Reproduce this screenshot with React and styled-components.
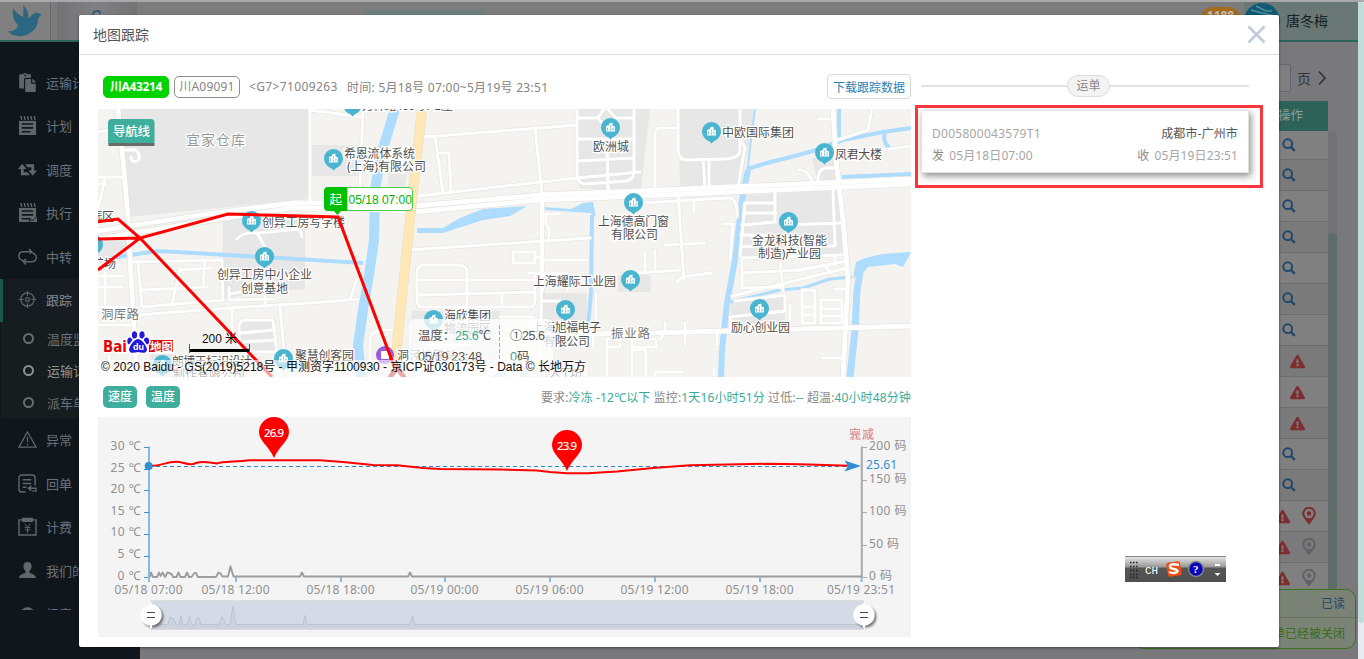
import React from 'react';
import styled, { createGlobalStyle } from 'styled-components';
import { FaPaste, FaExclamationTriangle } from 'react-icons/fa';

const GlobalStyle = createGlobalStyle`
  *, *::before, *::after { box-sizing: border-box; }
  body { margin: 0; background: #79797b; overflow: hidden; font-family: "Noto Sans", "Noto Sans CJK SC", sans-serif; font-size: 12px; }
`;
const SANS = '"Noto Sans", "Noto Sans CJK SC", sans-serif';
const ARIAL = '"Liberation Sans", "Noto Sans CJK SC", sans-serif';

/* ---------- page behind the dialog ---------- */
const Page = styled.div`position: relative; width: 1364px; height: 659px; overflow: hidden; display: flex; border-top: 2px solid #a9a9a9; background: #79797b;`;
const Shell = styled.div`width: 1358px; display: flex; flex-direction: column;`;
const Header = styled.header`height: 40px; flex: none; display: flex; border-bottom: 2px solid #2c6459; background: #7c7c7d;`;
const LogoCell = styled.div`width: 51px; padding: 3px 0 0 7px; background: #808081; border-right: 1px solid #686869;`;
const TopTab = styled.div`width: 80px; margin-left: 6px; display: flex; justify-content: center; padding-top: 7px; background: linear-gradient(90deg, #737375, #808082 50%, #737375);`;
const TopStrip = styled.div`width: 118px; height: 6px; margin: 8px 0 0 229px; background: #6a7f7b;`;
const Alerts = styled.div`width: 39px; height: 24px; margin: 5px 0 0 717px; border-radius: 12px; background: #a66a1c; color: #bdbdbd; text-align: center; font: bold 12px/18px "Noto Sans", sans-serif;`;
const UserCell = styled.div`flex: 1; margin-left: 4px; display: flex; gap: 6px; background: #697874; color: #18211f; font-size: 14px; line-height: 37px;`;
const Body = styled.div`flex: 1; min-height: 0; display: flex;`;
const Sidebar = styled.nav`width: 140px; padding-top: 19px; background: #10171c;`;
const MenuClip = styled.div`width: 79px; height: 549px; overflow: hidden;`;
const MenuItem = styled.div`
  height: 43.5px; width: 140px; display: flex; align-items: center; gap: 9px; padding-left: ${p => p.$active ? 15 : 18}px; padding-bottom: 1px;
  border-left: ${p => p.$active ? '3px solid #1e584d' : '0'};
  background: ${p => p.$active ? '#171c23' : 'transparent'}; color: ${p => p.$active ? '#858a90' : '#69717b'};
  font-size: 13px; white-space: nowrap;
  svg { width: 19px; height: 19px; color: #60676a; flex: none; }
`;
const SubMenu = styled.div`width: 139px; margin-left: 1px; height: 96.5px; background: #151d1f;`;
const SubItem = styled.div`
  height: 32px; display: flex; align-items: center; gap: 13px; padding-left: 22px; font-size: 13px; white-space: nowrap;
  color: ${p => p.$active ? '#92938f' : '#66727a'};
  &::before { content: ''; width: 11px; height: 11px; border-radius: 50%; border: 2px solid ${p => p.$active ? '#8a8f8f' : '#666e71'}; }
`;
const Main = styled.main`flex: 1; display: flex; flex-direction: column; align-items: flex-end; padding: 22px 21px 0 0;`;
const Pager = styled.div`height: 28px; display: flex; align-items: center; padding-right: 10px; font-size: 14px; color: #303337;`;
const PageInput = styled.div`width: 40px; height: 28px; margin-right: 6px; border: 1px solid #606874; border-radius: 2px; background: #7f7f80;`;
const NextPage = styled.svg`width: 10px; height: 16px; margin-left: 6px;`;
const TableArea = styled.div`display: flex; margin-top: 9px;`;
const Table = styled.div`width: 120px;`;
const TableHead = styled.div`height: 30px; padding-left: 70px; background: #2c6258; color: #8a9d99; font-size: 12.5px; line-height: 30px;`;
const Row = styled.div`
  height: 31px; display: flex; align-items: center; justify-content: flex-end; gap: 12px;
  padding-right: ${p => p.$kind === 'one' ? 32 : p.$kind === 'two' ? 23 : 12}px;
  border-bottom: 1px solid #6d6d6f; background: ${p => p.$alt ? '#7a7a7a' : '#808080'};
  &:nth-child(2) { height: 29px; padding-bottom: 1px; }
  svg { flex: none; }
`;
const TableScroll = styled.div`width: 9px; margin-top: 30px; height: 459px; background: #737375; border-radius: 4px 4px 0 0; padding-top: 102px;`;
const TableThumb = styled.div`height: 357px; background: #5c6d69; border-radius: 4px 4px 0 0;`;
const PageScroll = styled.div`width: 6px; background: #e9e9f2;`;
const PageThumb = styled.div`height: 621px; background: #c2ddd9; border-radius: 3px;`;
const Toast = styled.aside`position: absolute; left: 1134px; top: 587px; width: 222px; height: 60px; border: 1px solid #3c721d; border-radius: 10px; background: #7b8276; text-align: right; line-height: 28px;`;
const ToastTop = styled.div`height: 28px; padding-right: 10px; border-bottom: 1px solid #667360; color: #1f4967;`;
const ToastText = styled.div`padding-right: 10px; line-height: 31px; color: #376d1b;`;

/* ---------- dialog ---------- */
const Dialog = styled.section`position: absolute; left: 79px; top: 13px; width: 1200px; height: 632px; background: #fff; border-radius: 2px; box-shadow: 0 1px 3px rgba(0,0,0,.45); display: flex; flex-direction: column;`;
const DialogHead = styled.div`height: 40px; flex: none; display: flex; align-items: center; justify-content: space-between; padding: 0 13px 0 14px; border-bottom: 1px solid #dcdcdc; font-size: 14px; color: #555;`;
const DialogTitle = styled.span`padding-bottom: 2px;`;
const DialogBody = styled.div`flex: 1; display: flex; padding: 0 16px 10px 19px;`;
const Left = styled.div`width: 813px; flex: none;`;
const InfoBar = styled.div`height: 54px; display: flex; align-items: center; padding: 9px 0 0 5px; color: #858585; white-space: nowrap;`;
const Plate = styled.span`
  height: 22px; width: 66px; margin-right: 5px; border-radius: 5px; text-align: center; line-height: 20px;
  border: 1px solid ${p => p.$current ? '#00d200' : '#8d8d8d'}; background: ${p => p.$current ? '#00d200' : '#fff'};
  color: ${p => p.$current ? '#fff' : '#858585'}; font-weight: ${p => p.$current ? 700 : 400}; letter-spacing: ${p => p.$current ? -0.35 : 0.2}px;
`;
const Device = styled.span`margin-left: 4px; width: 98px; letter-spacing: .37px;`;
const Period = styled.span`letter-spacing: .27px;`;
const Download = styled.button`margin-left: auto; height: 25px; width: 84px; padding: 0; border: 1px solid #d8d8d8; border-radius: 4px; background: #fff; color: #2f7fb5; font: 12px ${SANS};`;
const MapSvg = styled.svg`display: block; width: 813px; height: 268px; background: #f4f3ef;`;
const StatsBar = styled.div`height: 40px; display: flex; align-items: center; gap: 9px; padding-left: 5px; white-space: nowrap;`;
const Toggle = styled.span`width: 34px; height: 22px; border-radius: 5px; background: #3fae9d; color: #fff; text-align: center; line-height: 21px; font-weight: 500;`;
const Stats = styled.div`margin-left: auto; color: #888; letter-spacing: .13px;`;
const Teal = styled.b`font-weight: 400; color: #38ab96;`;
const ChartSvg = styled.svg`display: block; width: 813px; height: 220px; background: #f4f4f4;`;
const Right = styled.div`width: 348px; margin-left: 4px;`;
const Divider = styled.div`height: 51px; padding: 11px 14px 0 6px; display: flex; align-items: center; color: #888;
  &::before, &::after { content: ''; height: 2px; background: #e2e2e2; }
  &::before { width: 146px; }
  &::after { flex: 1; }
`;
const Pill = styled.span`width: 43px; height: 22px; border: 1px solid #ddd; border-radius: 11px; background: #f3f3f3; text-align: center; line-height: 20px;`;
const Highlight = styled.div`height: 83px; border: 3px solid #fb363c; padding: 2px 11px 0 3px; margin-top: -1px;`;
const Card = styled.div`height: 63px; border: 1px solid #e2e2e2; box-shadow: 2px 3px 7px rgba(0,0,0,.45); padding: 12px 10px 0; background: #fff;`;
const CardLine = styled.div`height: 22px; display: flex; justify-content: space-between; line-height: 22px; color: #a6a6a6; letter-spacing: .13px;
  b { font-weight: 400; color: #555; }
  i { font-style: normal; color: #888; margin-right: 5px; }
`;
const OrderNo = styled.span`letter-spacing: .28px;`;
const ImeBar = styled.div`position: absolute; left: 1125px; top: 554px; width: 101px; height: 26px; display: flex; align-items: center; border-top: 1px solid #888; background: linear-gradient(#e4e4e4 0, #989898 10px, #565656 11px, #4f4f4f);`;

/* ---------- icons ---------- */
const Bird = () => (
  <svg width="36" height="33" viewBox="0 0 36 33"><path fill="#2c6782" d="M6 3C5 11 7 16 11 20C10 24 6 27 1 26C5 32 16 33 23 28C29 24 31 20 31 15C31 12 33 10 35 10C31 7 27 7 24 11C23 12 22 13 21 13C22 8 20 4 16 0C17 5 16 9 16 12C12 10 8 7 6 3Z" /></svg>
);
const Pad = ({ check }) => (
  <svg viewBox="0 0 20 20" fill="currentColor"><path d="M1 5h18v15H1z" /><path d="M3 1v4M6.500 1v4M10 1v4M13.500 1v4M17 1v4" stroke="#10171c" strokeWidth="3" /><path d="M3 0l1 4M6.500 0l1 4M10 0l1 4M13.500 0l1 4M17 0l1 4" stroke="currentColor" strokeWidth="1.500" /><path d="M4 8.500h12M4 12.500h12M4 16.500h9" stroke="#10171c" strokeWidth="1.600" />{check && <path d="M12 16l3 3 6-6v8h-9z" fill="#60676a" stroke="#10171c" />}</svg>
);
const Exchange = () => <svg viewBox="0 0 20 20"><path d="M0 9.500L4.500 4L9 9.500H6V13H10L12.500 16H3V9.500ZM20 11L15.500 16.500L11 11H14V7.500H10L7.500 4.500H17V11Z" fill="currentColor" /></svg>;
const Loop = () => <svg viewBox="0 0 20 20" fill="none" stroke="currentColor" strokeWidth="1.500"><path d="M14 5H5.500a4.500 4.500 0 0 0-3 8Q4 14.500 6 14.500M11.500 2l3 3-2 2M6 15.500h8.500a4.500 4.500 0 0 0 3-8Q16.500 6.500 15 6M8.500 12.500l-3 3 3 3" /></svg>;
const Target = () => <svg viewBox="0 0 20 20" fill="none" stroke="currentColor" strokeWidth="1.300"><circle cx="10" cy="10" r="7" /><circle cx="10" cy="10" r="2" /><path d="M10 1v5M10 14v5M1 10h5M14 10h5" /></svg>;
const WarnLine = () => <svg viewBox="0 0 20 20" fill="none" stroke="currentColor" strokeWidth="1.300"><path d="M10 2L1 18h18zM10 7v6M10 14.500v1.500" /></svg>;
const Receipt = () => <svg viewBox="0 0 20 20" fill="none" stroke="currentColor" strokeWidth="1.500"><path d="M18 12V4a3 3 0 0 0-3-3H4a3 3 0 0 0-3 3v12a3 3 0 0 0 3 3h4M5 6h9M5 10h9M5 14h4M12 15h7v3h-4M14 12.500l-3 2.500 3 2.500" /></svg>;
const Fee = () => <svg viewBox="0 0 20 20" fill="none" stroke="currentColor" strokeWidth="1.500"><path d="M1 3h18v16H1z" /><path d="M5 1.500h10v3H5z" fill="currentColor" /><path d="M7 7l3 4 3-4M7 11h6M7 13.500h6M10 11v6" strokeWidth="1" /></svg>;
const Person = () => <svg viewBox="0 0 20 20" fill="currentColor"><path d="M10 1c3 0 4.500 2 4.300 5-.2 2-1 3.500-2.300 4.700v1.300c1 1.500 7 1.500 7 6H1c0-4.500 6-4.500 7-6v-1.300C6.700 9.500 5.900 8 5.700 6 5.500 3 7 1 10 1z" /></svg>;
const Dome = () => <svg viewBox="0 0 20 20"><circle cx="10" cy="11.500" r="8" fill="currentColor" /></svg>;
const Search = () => <svg width="14" height="14" viewBox="0 0 14 14" fill="none" stroke="#20486a" strokeWidth="2"><circle cx="5.700" cy="5.700" r="4.400" /><path d="M8.800 8.800l4 4" strokeWidth="2.400" /></svg>;
const Marker = ({ color }) => <svg width="14" height="18" viewBox="0 0 14 18" fill="none" stroke={color} strokeWidth="2"><path d="M7 16C3 11 1.200 9 1.200 6.500a5.800 5.800 0 0 1 11.600 0C12.800 9 11 11 7 16z" /><path d="M4 11l3 6 3-6z" fill={color} stroke="none" /><circle cx="7" cy="6.500" r="1.200" /></svg>;

const menuTop = [[<FaPaste />, '运输计划'], [<Pad />, '计划'], [<Exchange />, '调度'], [<Pad check />, '执行'], [<Loop />, '中转'], [<Target />, '跟踪', true]];
const menuBottom = [[<WarnLine />, '异常'], [<Receipt />, '回单'], [<Fee />, '计费'], [<Person />, '我们的'], [<Dome />, '报表']];
const rows = [...Array(7).fill('one'), 'two', 'two', 'two', 'one', 'one', 'red', 'gray', 'gray'];

/* ---------- map ---------- */
const blocks = [
  'M121 109H309V199L128 217Z', 'M312 145H360V176H312Z', 'M388 174H407L404 190H388Z', 'M577 109H650L642 180L640 193L580 188Z',
  'M678 109H755L741 187H680Z', 'M742 195L840 190L843 255L740 258Z', 'M731 300L785 294V328H730Z', 'M618 275H651V292H618Z',
  'M223 217H305V290H265L223 300Z', 'M412 311H500V377H408Z', 'M543 293H587V327H543Z', 'M812 158H838V183H818Z', 'M150 354H197V377H150Z', 'M98 236L127 231V256L98 260Z', 'M238 320H276V350H242Z'
];
const minorRoads = [
  'M310 109V203', 'M310 110L361 117M363 109L360 187', 'M98 132L110 130M98 177H122M98 184H106M105 178L98 210', 'M122 150H135Q140 152 139 160Q132 164 131 157',
  'M132 262L222 260L223 300L142 307L138 262M142 290L208 287M180 268L172 304M180 270L213 268M205 262L203 286', 'M138 315L230 308L323 302L358 299M357 279L351 297', 'M232 308V340M280 307L284 350',
  'M237 239Q242 232 257 233L300 229L302 237M257 233L265 247M265 267V307M229 288V300L273 299M229 294L265 288', 'M239 345V326Q239 320 246 320H273L277 352M240 333L275 330M240 342L276 340M242 352H277',
  'M98 276H124M98 287H122M105 265V307M98 307H125', 'M409 250L590 238M424 137L577 125M535 128L542 193L541 320', 'M435 137L443 193M438 153H449L451 192', 'M418 196L577 178L640 172',
  'M424 265H458Q467 265 467 272V307H423Q417 307 417 300V272Q417 265 424 265M417 280H535M417 295L535 292M467 307H530Q535 307 535 300V276M502 294V307', 'M513 263V252H535V263ZM535 257H542M542 260H587M528 273H567V290',
  'M545 214H560M546 215V224Q551 229 548 241M543 301H560M500 317H533V333M507 323V340', 'M577 109V176Q578 184 586 184L627 181Q634 179 634 172V109M577 118H598M616 118H634M577 139H634M577 161L634 158M604 109L598 118L602 123M608 109L616 118M607 139L608 190',
  'M655 195V134Q655 128 661 128H675M678 109V151Q679 160 687 160L725 159Q740 158 740 150V109M703 160L705 188M709 160V188M740 139L745 147L738 187', 'M837 140L868 130L872 109M870 152L911 146M798 170Q807 168 813 183M818 183Q817 169 826 168H837M818 119H833',
  'M643 203L728 198Q738 197 737 217M694 201V213M678 193L684 280M665 245L705 243M623 274L680 270M677 282L682 277L712 273M645 253V272M655 250V270',
  'M745 203H775M746 213H776M745 203L740 256M742 225L774 222M741 235H774M741 247L772 245M775 190V222M742 258L843 255M724 224H733L730 260', 'M833 190L835 246H820M785 225L840 223M835 256V265M742 260V288L783 287M743 273L797 270L825 265L831 273M780 258L783 291M732 296L847 268M797 271L847 261',
  'M730 317L785 311V295L735 301M730 334L731 317M790 305V325', 'M807 290H815V323H802V290ZM802 307H815M802 315H815M821 300H842V323H821ZM821 309H842M821 316H842M834 289H848', 'M630 339H656V347H632M632 339V377M632 350H646V377M655 377V372H683M665 322V332L660 340M685 322V345M717 332V345M822 358H842M714 375V368',
  'M109 355V377M98 325H130M377 330H398M370 377V340Q371 331 380 331M596 293V333M593 333V345', 'M607 377V339H620V347H607', 'M503 373H540V347M430 361V345H470'
];
const mainRoads = ['M98 239L207 221L293 208L370 209L415 212L540 200L640 196L911 184', 'M98 231L207 214L293 203L370 203', 'M415 206L540 195L640 191L911 179', 'M118 109L123 160L128 217L131 277L137 377', 'M833 109L836 160L843 220L848 277L843 377', 'M577 332L593 334L653 333L911 326', 'M542 195V290'];
const pins = [[352, 104], [333, 158], [610, 127], [711, 131], [824, 152], [633, 202], [788, 221], [759, 308], [630, 279], [565, 309], [433, 319], [251, 220], [264, 256], [283, 358], [162, 364], [500, 381], [93, 244]];
// label, left edge, vertical centre, width
const labels = [
  ['万祥路400号7-2座', 362, 105, 91], ['希恩流体系统', 344, 153, 71], ['(上海)有限公司', 347, 166, 79], ['欧洲城', 593, 146, 36], ['中欧国际集团', 722, 132, 72], ['凤君大楼', 835, 154, 47],
  ['上海德高门窗', 598, 221, 71], ['有限公司', 611, 234, 47], ['金龙科技(智能', 752, 240, 75], ['制造)产业园', 758, 253, 63], ['励心创业园', 731, 327, 59], ['上海耀际工业园', 533, 281, 83],
  ['上海旭福电子', 532, 327, 69], ['有限公司', 543, 341, 47], ['海欣集团', 444, 315, 47], ['物流园区', 444, 328, 47], ['创异工房写字楼', 262, 222, 83], ['创异工房中小企业', 217, 274, 95], ['创意基地', 241, 288, 47],
  ['聚慧创客园', 295, 355, 59], ['朗博王标识设计', 172, 361, 80], ['制作有限公司', 173, 374, 72], ['洞泾地铁站', 397, 355, 60], ['园区', 92, 216, 22], ['广场', 94, 263, 22], ['上海传媒人工坊', 508, 373, 74]
];

const TrackMap = () => (
  <MapSvg viewBox="98 109 813 268">
    {blocks.map(d => <path key={d} d={d} fill="#e7e7e7" />)}
    <g fill="none" stroke="#addcfe" strokeLinejoin="round">
      <path d="M395 109L381 155L375 190L374 240L369 275L363 310L358 345L361 377" strokeWidth="10" />
      <path d="M98 260L157 251L177 252L363 263" strokeWidth="4" /><path d="M592 215L591 293L588 327" strokeWidth="4" />
      <path d="M755 109L750 147L748 168" strokeWidth="2" /><path d="M748 170L742 200L735 260L727 303L722 350L721 377" strokeWidth="6" />
      <path d="M747 169Q758 165 787 158L813 151L843 140L883 132L911 128M839 109V138M885 133Q882 142 890 148" strokeWidth="4" /><path d="M842 177L911 174" strokeWidth="4" />
      <path d="M730 302L780 290L803 288L830 279L852 277" strokeWidth="3" /><path d="M861 266L857 290L855 330L850 377" strokeWidth="7" />
    </g>
    <g fill="#addcfe"><path d="M417 228H443L460 218L483 209L527 206L510 216L483 220L443 233H417Z" /><path d="M543 207L571 209L583 203L593 202L596 217L590 213L545 210Z" /><path d="M853 278L856 262L865 258L883 254L911 252L908 258L903 267L895 264L868 267L863 273Z" /></g>
    <g fill="none" strokeLinejoin="round" strokeLinecap="round">
      {minorRoads.map(d => <path key={d} d={d} stroke="#e3e3e1" strokeWidth="4.200" />)}
      {mainRoads.map(d => <path key={d} d={d} stroke="#e0e0de" strokeWidth="6" />)}
      {minorRoads.map(d => <path key={d} d={d} stroke="#fff" strokeWidth="3" />)}
      {mainRoads.map(d => <path key={d} d={d} stroke="#fff" strokeWidth="4.800" />)}
      <path d="M422 109L411 210L397 345L395 377" stroke="#e9ddc0" strokeWidth="10" /><path d="M422 109L411 210L397 345L395 377" stroke="#ffe8b6" strokeWidth="8.800" />
    </g>
    {pins.map(([x, y]) => (
      <g key={`${x}-${y}`} transform={`translate(${x + 0.5} ${y + 0.5})`}><path d="M-9.500 0a9.500 9.500 0 1 1 19 0C9.500 5 5 9 2.500 9.500L0 12L-2.500 9.500C-5 9-9.500 5-9.500 0Z" fill="#49b5d1" /><path d="M-4.500 4V-1.500L-1.500 -2.500V-4L2 -5V-2L4.500 -1V4Z" fill="#fff" /><path d="M0 -2V0M0 1V3M2.500 0V3M-3 0V3" stroke="#49b5d1" strokeWidth=".8" /></g>
    ))}
    <circle cx="385" cy="355" r="9" fill="#9b5be0" /><path d="M381 351h8v8h-8z" fill="#fff" />
    <g fill="#505050" stroke="#fff" strokeWidth="2.500" paintOrder="stroke" fontSize="12" fontFamily={SANS}>
      {labels.map(([t, x, y, w]) => <text key={t + x} x={x} y={y + 4.5} textLength={w}>{t}</text>)}
      <text x="186" y="144.500" textLength="59" fontSize="14" fill="#999">宜家仓库</text><text x="101" y="319" textLength="38" fill="#777" fontSize="12.500">洞厍路</text><text x="611" y="337.500" textLength="39" fill="#777" fontSize="12.500">振业路</text>
    </g>
    <path d="M98 221.700L118 219L140 238L272 377M98 239L140 238M98 270L140 238L228 214L338 217L394 366" stroke="#f00" strokeWidth="3" fill="none" />
    <path d="M397 363L410 382H384Z" fill="#c62828" /><path d="M397 372l4 5h-8z" fill="#fff" />
    <rect x="409" y="319" width="144" height="58" rx="6" fill="#fff" fillOpacity=".75" />
    <path d="M499.500 325V364" stroke="#aaa" strokeDasharray="4 2" />
    <g fontFamily={ARIAL} fontSize="12.500" fill="#555">
      <text x="418" y="339.500" textLength="73">温度：<tspan fill="#38ab96">25.6</tspan>℃</text><text x="510" y="339.500" textLength="35">①25.6</text>
      <text x="418" y="360.500" textLength="64">05/19 23:48</text><text x="510" y="360.500"><tspan fill="#38ab96">0</tspan>码</text>
    </g>
    <g>
      <path d="M347 187.500H409Q412.500 187.500 412.500 191V207Q412.500 210.500 409 210.500H347Z" fill="#fff" stroke="#4bcf4b" />
      <path d="M328 187H347V211H341L337.500 215L334 211H328Q324 211 324 207V191Q324 187 328 187Z" fill="#00bf00" />
      <text x="329.500" y="203.500" fill="#fff" fontSize="12.500" fontFamily={SANS}>起</text><text x="348.500" y="203.500" fill="#00b400" fontSize="12.500" textLength="63.500" lengthAdjust="spacingAndGlyphs" fontFamily={ARIAL}>05/18 07:00</text>
    </g>
    <rect x="108" y="119" width="46.500" height="27" rx="4" fill="#3fae9d" /><path d="M108.500 143H154.500V146H108.500Z" fill="#6b6b6b" /><text x="113" y="136" fill="#fff" fontSize="12.500" fontWeight="500" textLength="37" fontFamily={SANS}>导航线</text>
    <rect x="98" y="360" width="489" height="17" fill="#fff" fillOpacity=".6" />
    <g fontFamily={ARIAL} fill="#111" fontSize="12">
      <text x="202" y="343" textLength="35">200 米</text><path d="M189.500 344V353M249.500 344V353" stroke="#555" /><path d="M190 350.500H249" stroke="#000" strokeWidth="3" />
      <text x="101" y="371" textLength="485">© 2020 Baidu - GS(2019)5218号 - 甲测资字1100930 - 京ICP证030173号 - Data © 长地万方</text>
    </g>
    <g stroke="#fff" strokeWidth="3" paintOrder="stroke" fontWeight="bold">
      <text x="103" y="352" fontSize="15.500" fill="#e10602" textLength="24" lengthAdjust="spacingAndGlyphs" fontFamily='"DejaVu Sans", sans-serif'>Bai</text>
      <rect x="149" y="340" width="24" height="12" fill="#e10602" />
      <g fill="#2319dc"><ellipse cx="130" cy="341" rx="2.700" ry="3.500" /><ellipse cx="134.500" cy="335" rx="2.600" ry="3.700" /><ellipse cx="142" cy="335" rx="2.600" ry="3.700" /><ellipse cx="146.500" cy="341" rx="2.700" ry="3.500" /><path d="M138 339C143 340 146 346 147 349C147 354 142 353 138 352C134 353 129 354 129 349C130 346 133 340 138 339Z" /></g>
      <text x="133" y="350" fontSize="9" stroke="none" fill="#fff" fontFamily={ARIAL}>du</text><text x="150" y="350.500" fontSize="11.500" stroke="none" fill="#fff" fontFamily={SANS}>地图</text>
    </g>
  </MapSvg>
);

/* ---------- chart ---------- */
const speed = 'M150 577L151 572.500L153 577H157L159 572.500L160.500 576L162.500 572.500L165 577L167.500 572.500L171.500 574L173 577H176.500L178.500 572.500L180.500 577H185L187 572.500L189 577H191.500L194.500 573L196 573L198 577H216L218.500 572.500L220.500 573.500L222.500 576.500H228L230.500 566.500L233.500 576.500H300L302 572.500L304 576.500H408L410 572.500L412 576.500H862';
const xTicks = [[149, '05/18 07:00'], [236, '05/18 12:00'], [341, '05/18 18:00'], [445, '05/19 00:00'], [550, '05/19 06:00'], [655, '05/19 12:00'], [760, '05/19 18:00'], [861.5, '05/19 23:51']];
const Balloon = ({ x, y, value }) => (
  <g transform={`translate(${x} ${y})`}><path d="M-15 0A15 15 0 0 1 15 0C15 9 5 14 0 26C-5 14-15 9-15 0Z" fill="#f00" /><text y="4.500" fill="#fff" fontSize="11.500" fontWeight="500" textAnchor="middle" textLength="20">{value}</text></g>
);
const Handle = ({ x }) => (
  <g><circle cx={x + 2} cy="617" r="10.500" fill="#444" opacity=".7" filter="url(#soft)" /><path d={`M${x} 603V628`} stroke="#fff" strokeWidth="2" /><circle cx={x} cy="615" r="10.700" fill="#fff" /><path d={`M${x - 4} 612.500h8M${x - 4} 617.500h8`} stroke="#444" strokeWidth="1.200" /></g>
);
const Chart = () => (
  <ChartSvg viewBox="98 417 813 220" fontFamily={SANS} fontSize="12">
    <defs><filter id="soft"><feGaussianBlur stdDeviation="1.300" /></filter></defs>
    <path d="M149 446.500V577" stroke="#86bce3" strokeWidth="2" /><path d="M861.800 446.500V577" stroke="#aaa" strokeWidth="2" />
    {[30, 25, 20, 15, 10, 5, 0].map((v, i) => <g key={v}><path d={`M144 ${Math.round(447 + i * 21.7) + 0.5}H149`} stroke="#3c91cf" /><text x="140.500" y={450 + i * 21.6} textAnchor="end" fill="#909090" textLength={v > 9 ? 30 : 23}>{v} ℃</text></g>)}
    {[200, 150, 100, 50, 0].map((v, i) => <g key={v}><path d={`M862 ${Math.round(447 + i * 32.5) + 0.5}H867`} stroke="#aaa" /><text x="869" y={450 + i * 32.5} fill="#909090" textLength={v > 99 ? 37.5 : v > 9 ? 30 : 23}>{v} 码</text></g>)}
    <path d={speed} stroke="#9b9e9a" strokeWidth="1.900" fill="none" strokeLinejoin="round" />
    {xTicks.map(([x, t]) => <g key={t}><path d={`M${x} 577V582`} stroke="#86bce3" strokeWidth="2" /><text x={x - 0.5} y="594" textAnchor="middle" textLength="68" fill="#909090">{t}</text></g>)}
    <path d="M149 466.500H850" stroke="#2e8acb" strokeDasharray="4 3" />
    <path d="M150 466C164 466 165 461.700 176 461.700C183 461.700 186 465 193 464C201 461 205 462 217 463.500C222 461.500 233 462 250 460.300H320L343 462L373 465L397 465.300L423 468L440 469L500 469.500L537 470.500L550 472L567 473.300H588L617 471.600L653 468L690 465.300L767 463.800L800 464.300L850 465.800" stroke="#f00" strokeWidth="2" fill="none" />
    <circle cx="148.700" cy="466" r="4" fill="#2e8fd3" /><path d="M844.500 460.500L861 466L844.500 471.500L848 466Z" fill="#2e8fd3" /><text x="866" y="469.300" fill="#3a8fd0" textLength="31">25.61</text>
    <text x="849" y="438.500" fill="#e86868" opacity=".6" textLength="25">衰减</text><text x="849" y="438.500" fill="#b66" opacity=".5" textLength="25">完成</text>
    <Balloon x={274} y={432} value="26.9" /><Balloon x={567} y={445} value="23.9" />
    <rect x="151" y="600" width="713" height="29.500" fill="#d5dbe6" /><rect x="151" y="624" width="713" height="5.500" fill="#cbd1df" />
    <path d="M151 600.500H864" stroke="#dedede" /><path d="M151 624.500H168L170 617L174 619L176 624.500H179L181 616L183 624.500H187L189.500 616L191.500 624.500H195L197 618H199L201 624.500H219L221.500 616.500L223.500 618L225.500 624.500H230L233 606L236 624.500H303L305 615.500L307 624.500H410L412.500 615.500L415 624.500H864" stroke="#bdc4d2" fill="#cbd1df" /><path d="M151 629.300H864" stroke="#dadada" />
    <Handle x={151} /><Handle x={864} />
  </ChartSvg>
);

export default function App() {
  return (
    <Page>
      <GlobalStyle />
      <Shell>
        <Header>
          <LogoCell><Bird /></LogoCell>
          <TopTab><svg width="12" height="12" viewBox="0 0 12 12"><path d="M2 8Q1 2 6 2Q10 2 9 5" fill="none" stroke="#315a72" strokeWidth="1.800" /></svg></TopTab>
          <TopStrip />
          <Alerts>1188</Alerts>
          <UserCell><svg width="36" height="38" viewBox="0 0 36 38"><circle cx="18" cy="19" r="18" fill="#125a72" /><path d="M7 8L18 11L31 14M12 4L22 9L28 9" stroke="#4d8d9d" strokeWidth="1.500" fill="none" /></svg>唐冬梅</UserCell>
        </Header>
        <Body>
          <Sidebar><MenuClip>
            {menuTop.map(([icon, label, active]) => <MenuItem key={label} $active={active}>{icon}{label}</MenuItem>)}
            <SubMenu><SubItem>温度监控</SubItem><SubItem $active>运输订单</SubItem><SubItem>派车单</SubItem></SubMenu>
            {menuBottom.map(([icon, label]) => <MenuItem key={label}>{icon}{label}</MenuItem>)}
          </MenuClip></Sidebar>
          <Main>
            <Pager><PageInput />页<NextPage viewBox="0 0 10 16"><path d="M2 1.500L8 8L2 14.500" fill="none" stroke="#333639" strokeWidth="1.800" /></NextPage></Pager>
            <TableArea>
              <Table>
                <TableHead>操作</TableHead>
                {rows.map((kind, i) => (
                  <Row key={i} $kind={kind} $alt={i % 2 === 1}>
                    {(kind === 'one' || kind === 'two') && <Search />}
                    {kind !== 'one' && <FaExclamationTriangle size={15} color="#7e2c2e" />}
                    {kind === 'red' && <Marker color="#7e2c2e" />}{kind === 'gray' && <Marker color="#626264" />}
                  </Row>
                ))}
              </Table>
              <TableScroll><TableThumb /></TableScroll>
            </TableArea>
          </Main>
        </Body>
      </Shell>
      <PageScroll><PageThumb /></PageScroll>
      <Toast><ToastTop>已读</ToastTop><ToastText>运单已经被关闭</ToastText></Toast>

      <Dialog>
        <DialogHead><DialogTitle>地图跟踪</DialogTitle><svg width="19" height="19" viewBox="0 0 19 19"><path d="M1.500 1.500L17.500 17.500M17.500 1.500L1.500 17.500" stroke="#bfcadb" strokeWidth="2.600" /></svg></DialogHead>
        <DialogBody>
          <Left>
            <InfoBar>
              <Plate $current>川A43214</Plate><Plate>川A09091</Plate><Device>&lt;G7&gt;71009263</Device><Period>时间: 5月18号 07:00~5月19号 23:51</Period>
              <Download>下载跟踪数据</Download>
            </InfoBar>
            <TrackMap />
            <StatsBar>
              <Toggle>速度</Toggle><Toggle>温度</Toggle>
              <Stats>要求:<Teal>冷冻 -12℃以下</Teal> 监控:<Teal>1天16小时51分</Teal> 过低:<Teal>--</Teal> 超温:<Teal>40小时48分钟</Teal></Stats>
            </StatsBar>
            <Chart />
          </Left>
          <Right>
            <Divider><Pill>运单</Pill></Divider>
            <Highlight><Card>
              <CardLine><OrderNo>D005800043579T1</OrderNo><b>成都市-广州市</b></CardLine>
              <CardLine><span><i>发</i>05月18日07:00</span><span><i>收</i>05月19日23:51</span></CardLine>
            </Card></Highlight>
          </Right>
        </DialogBody>
      </Dialog>

      <ImeBar>
        <svg width="101" height="25" viewBox="0 0 101 25">
          <path d="M5 5.500H13M5 9.500H13M5 13.500H13M5 17.500H13M5 20.500H13" stroke="#222" strokeWidth="1.500" strokeDasharray="1.500 1.500" />
          <text x="20" y="16.500" fill="#fff" fontSize="11" fontFamily='"Liberation Mono", monospace'>CH</text>
          <rect x="42" y="5" width="14" height="14" rx="2" fill="#f04a10" transform="rotate(-9 49 12)" /><path d="M54 8Q45 6 45 9.500Q45 11.500 49 12Q54 13 52 15Q49 17 44 15" stroke="#fff" strokeWidth="2.400" fill="none" />
          <circle cx="71" cy="12" r="7.500" fill="#0808b8" stroke="#888" strokeWidth="1.500" /><text x="68" y="16" fill="#fff" fontSize="11" fontWeight="bold" fontFamily='"Liberation Serif", serif'>?</text>
          <path d="M90 8H95" stroke="#fff" strokeWidth="2" /><path d="M89.500 16H95.500L92.500 19Z" fill="#fff" />
        </svg>
      </ImeBar>
    </Page>
  );
}
